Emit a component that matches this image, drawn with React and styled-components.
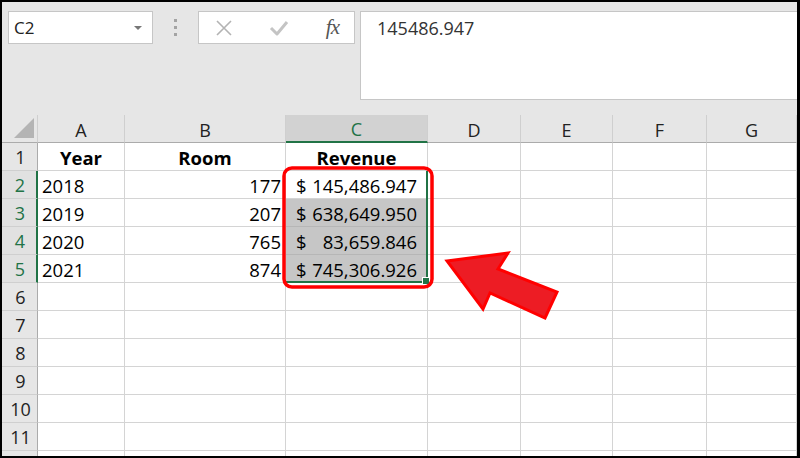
import React from 'react';
import styled, { createGlobalStyle } from 'styled-components';

const GlobalStyle = createGlobalStyle`
  html, body {
    margin: 0;
    padding: 0;
    background: #fff;
  }
  * {
    box-sizing: border-box;
  }
`;

const GREEN = '#217346';
const GRID = '#d4d4d4';
const COLS = [36, 87, 161, 142, 93, 92, 94, 90];
const LETTERS = ['A', 'B', 'C', 'D', 'E', 'F', 'G'];

const Screen = styled.div`
  position: relative;
  width: 800px;
  height: 458px;
  overflow: hidden;
  border: 2px solid #000;
  border-right-width: 3px;
  background: #fff;
  font-family: "Open Sans", "Liberation Sans", sans-serif;
  color: #000;
`;

const Toolbar = styled.div`
  height: 113px;
  background: #e6e6e6;
  display: flex;
  align-items: flex-start;
  padding: 9px 0 0 6px;
`;

const NameBox = styled.div`
  width: 145px;
  height: 33px;
  background: #fff;
  border: 1px solid #c6c6c6;
  display: flex;
  align-items: center;
  justify-content: space-between;
  padding: 0 10px 0 5px;
  font-size: 17px;
  color: #222;
`;

const Caret = styled.span`
  width: 0;
  height: 0;
  border-left: 4px solid transparent;
  border-right: 4px solid transparent;
  border-top: 4px solid #777;
`;

const Grip = styled.div`
  width: 45px;
  height: 33px;
  display: flex;
  flex-direction: column;
  align-items: center;
  justify-content: center;
  gap: 4px;

  span {
    width: 3px;
    height: 3px;
    background: #a3a3a3;
  }
`;

const ButtonsBox = styled.div`
  width: 157px;
  height: 33px;
  background: #fff;
  border: 1px solid #c6c6c6;
  display: flex;
  align-items: center;
  justify-content: space-between;
  padding: 0 15px 0 16px;
`;

const Fx = styled.span`
  font-family: "Liberation Serif", "DejaVu Serif", serif;
  font-style: italic;
  font-size: 21px;
  color: #555;
  letter-spacing: -1px;
`;

const FormulaBox = styled.div`
  flex: 1;
  height: 89px;
  margin-left: 5px;
  background: #fff;
  border: 1px solid #c6c6c6;
  border-right: none;
  padding: 4px 0 0 16px;
  font-size: 18px;
  color: #333;
`;

const Sheet = styled.div`
  position: relative;
  display: grid;
  grid-template-columns: ${COLS.map((c) => `${c}px`).join(' ')};
  grid-auto-rows: 28px;
`;

const Corner = styled.div`
  position: relative;
  background: #e6e6e6;
  border-right: 1px solid #cfcfcf;
  border-bottom: 1px solid #ababab;

  &::after {
    content: '';
    position: absolute;
    right: 3px;
    bottom: 4px;
    width: 0;
    height: 0;
    border-left: 20px solid transparent;
    border-bottom: 20px solid #b4b4b4;
  }
`;

const ColHead = styled.div`
  background: ${(p) => (p.$selected ? '#d2d2d2' : '#e6e6e6')};
  border-right: 1px solid #cfcfcf;
  border-bottom: ${(p) => (p.$selected ? `2px solid ${GREEN}` : '1px solid #ababab')};
  color: ${(p) => (p.$selected ? GREEN : '#222')};
  font-size: 18px;
  display: flex;
  align-items: center;
  justify-content: center;
  padding-top: 2px;
`;

const RowHead = styled.div`
  background: ${(p) => (p.$selected ? '#e1e1e1' : '#e6e6e6')};
  border-bottom: 1px solid #cfcfcf;
  border-right: ${(p) => (p.$selected ? `2px solid ${GREEN}` : '1px solid #ababab')};
  color: ${(p) => (p.$selected ? GREEN : '#222')};
  font-size: 18px;
  display: flex;
  align-items: center;
  justify-content: center;
  padding-left: 2px;
`;

const Cell = styled.div`
  background: ${(p) => (p.$shade ? '#c6c6c6' : '#fff')};
  border-right: 1px solid ${GRID};
  border-bottom: 1px solid ${(p) => (p.$shade ? '#b6b6b6' : GRID)};
  font-size: 18.5px;
  font-weight: ${(p) => (p.$bold ? 700 : 400)};
  display: flex;
  align-items: center;
  justify-content: ${(p) =>
    p.$align === 'right' ? 'flex-end' : p.$align === 'center' ? 'center' : p.$align === 'split' ? 'space-between' : 'flex-start'};
  padding: ${(p) => (p.$align === 'split' ? '0 10px 0 10px' : '0 4px')};
  white-space: nowrap;
  padding-top: 1px;
`;

const SelectionFrame = styled.div`
  position: absolute;
  left: ${COLS[0] + COLS[1] + COLS[2]}px;
  top: 56px;
  width: ${COLS[3]}px;
  height: 112px;
  border-right: 2px solid ${GREEN};
  border-bottom: 2px solid ${GREEN};
  pointer-events: none;

  &::after {
    content: '';
    position: absolute;
    right: -4px;
    bottom: -4px;
    width: 6px;
    height: 6px;
    background: ${GREEN};
    border: 1px solid #fff;
  }
`;

const Annotation = styled.svg`
  position: absolute;
  left: -2px;
  top: -2px;
  width: 800px;
  height: 458px;
  pointer-events: none;
`;

const rows = [
  [{ t: 'Year', a: 'center', b: true }, { t: 'Room', a: 'center', b: true }, { t: 'Revenue', a: 'center', b: true }],
  [{ t: '2018' }, { t: '177', a: 'right' }, { t: ['$', '145,486.947'], a: 'split' }],
  [{ t: '2019' }, { t: '207', a: 'right' }, { t: ['$', '638,649.950'], a: 'split', s: true }],
  [{ t: '2020' }, { t: '765', a: 'right' }, { t: ['$', '83,659.846'], a: 'split', s: true }],
  [{ t: '2021' }, { t: '874', a: 'right' }, { t: ['$', '745,306.926'], a: 'split', s: true }],
];

const App = () => {
  const body = [];
  for (let r = 0; r < 12; r++) {
    const n = r + 1;
    const selected = n >= 2 && n <= 5;
    // row 12 only peeks in under the frame edge, its number is not visible
    body.push(
      <RowHead key={`h${n}`} $selected={selected}>
        {n <= 11 ? n : ''}
      </RowHead>
    );
    for (let c = 0; c < 7; c++) {
      const data = rows[r] && rows[r][c];
      if (!data) {
        body.push(<Cell key={`${n}-${c}`} />);
        continue;
      }
      body.push(
        <Cell key={`${n}-${c}`} $align={data.a} $bold={data.b} $shade={data.s}>
          {Array.isArray(data.t) ? (
            <>
              <span>{data.t[0]}</span>
              <span>{data.t[1]}</span>
            </>
          ) : (
            data.t
          )}
        </Cell>
      );
    }
  }

  return (
    <>
      <GlobalStyle />
      <Screen>
        <Toolbar>
          <NameBox>
            <span>C2</span>
            <Caret />
          </NameBox>
          <Grip>
            <span />
            <span />
            <span />
          </Grip>
          <ButtonsBox>
            <svg width="18" height="18" viewBox="0 0 18 18">
              <path d="M2 2 L16 16 M16 2 L2 16" stroke="#b3b3b3" strokeWidth="1.6" fill="none" />
            </svg>
            <svg width="20" height="18" viewBox="0 0 20 18">
              <path d="M2 9 L8 15 L18 3" stroke="#c4c4c4" strokeWidth="3" fill="none" strokeLinejoin="round" />
            </svg>
            <Fx>fx</Fx>
          </ButtonsBox>
          <FormulaBox>145486.947</FormulaBox>
        </Toolbar>
        <Sheet>
          <Corner />
          {LETTERS.map((l) => (
            <ColHead key={l} $selected={l === 'C'}>
              {l}
            </ColHead>
          ))}
          {body}
          <SelectionFrame />
        </Sheet>
        <Annotation viewBox="0 0 800 458">
          <rect x="284" y="168" width="148" height="119" rx="8" ry="8" fill="none" stroke="#ff0000" strokeWidth="3.5" />
          <polygon
            points="447,261 508,253 498,269 557,292 545,318 490,293 483,309"
            fill="#ed1c24"
            stroke="#ff0000"
            strokeWidth="3"
            strokeLinejoin="miter"
          />
        </Annotation>
      </Screen>
    </>
  );
};

export default App;
